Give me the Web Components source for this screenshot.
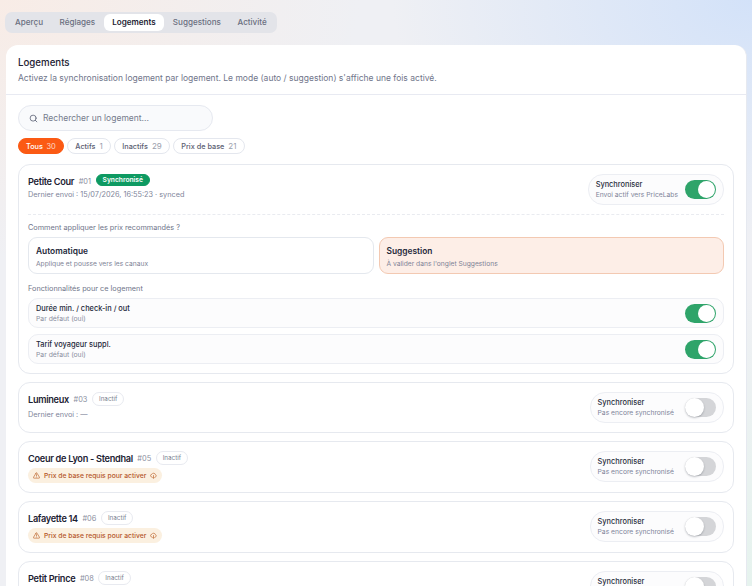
<!DOCTYPE html>
<html lang="fr">
<head>
<meta charset="utf-8">
<title>Logements</title>
<style>
  html, body { height: 100%; }
  body {
    margin: 0;
    height: 586px;
    overflow: hidden;
    font-family: Inter, "Liberation Sans", sans-serif;
    color: #1d2233;
    background:
      radial-gradient(360px 260px at 0 0, #f8ece6 0%, rgba(248,236,230,0) 100%),
      radial-gradient(360px 240px at 100% 0, #d3e2f9 0%, rgba(211,226,249,0) 100%),
      radial-gradient(300px 300px at 100% 100%, #e6f3ee 0%, rgba(230,243,238,0) 100%),
      #eff0f4;
  }
  .page { padding: 12px 5px 0 6px; display: flex; flex-direction: column; gap: 12px; height: 586px; box-sizing: border-box; overflow: hidden; }
</style>
</head>
<body>
<div class="page">
  <app-tabs active="Logements" items="Aperçu,Réglages,Logements,Suggestions,Activité"></app-tabs>
  <main-panel title="Logements" desc="Activez la synchronisation logement par logement. Le mode (auto / suggestion) s'affiche une fois activé.">
    <search-box placeholder="Rechercher un logement..."></search-box>
    <filter-pills></filter-pills>
    <div style="display:flex;flex-direction:column;gap:8px;margin-top:10px">
      <listing-card name="Petite Cour" num="#01" status="on" meta="Dernier envoi : 15/07/2026, 16:55:23 · synced">
        <listing-details></listing-details>
      </listing-card>
      <listing-card name="Lumineux" num="#03" meta="Dernier envoi : —"></listing-card>
      <listing-card name="Coeur de Lyon - Stendhal" num="#05" warn></listing-card>
      <listing-card name="Lafayette 14" num="#06" warn></listing-card>
      <listing-card name="Petit Prince" num="#08" warn></listing-card>
    </div>
  </main-panel>
</div>

<script>
class AppTabs extends HTMLElement {
  connectedCallback() {
    const active = this.getAttribute('active');
    const items = this.getAttribute('items').split(',');
    this.attachShadow({ mode: 'open' }).innerHTML = `
      <style>
        :host { display: flex; margin-left: -1px; }
        .bar { display: flex; gap: .5px; padding: 2px; background: #e3e4e9; border-radius: 7px; height: 17px; }
        .tab { padding: 0 8px; font-size: 8.1px; font-weight: 500; line-height: 17px; color: #6a6f80; border-radius: 6px; }
        .tab.on { background: #fff; color: #1d2233; font-weight: 600; padding: 0 8.5px; }
      </style>
      <div class="bar">${items.map(t => `<div class="tab ${t === active ? 'on' : ''}">${t}</div>`).join('')}</div>`;
  }
}

class MainPanel extends HTMLElement {
  connectedCallback() {
    this.attachShadow({ mode: 'open' }).innerHTML = `
      <style>
        :host { display: block; flex: 1; background: #fff; border-radius: 12px 12px 0 0; border-right: 1px solid #e6e9f0; }
        header { height: 50px; box-sizing: border-box; padding: 11px 12px 0; border-bottom: 1px solid #e8eaf2; }
        h2 { margin: 0; font-size: 9.7px; line-height: 13px; font-weight: 500; color: #1d2233; }
        p { margin: 3px 0 0; font-size: 8.5px; line-height: 13px; color: #70758a; }
        .body { padding: 10px 12px 0; }
      </style>
      <header><h2>${this.getAttribute('title')}</h2><p>${this.getAttribute('desc')}</p></header>
      <div class="body"><slot></slot></div>`;
  }
}

class SearchBox extends HTMLElement {
  connectedCallback() {
    this.attachShadow({ mode: 'open' }).innerHTML = `
      <style>
        :host { display: flex; align-items: center; gap: 5px; width: 195px; height: 26px; box-sizing: border-box;
          padding: 0 10px; background: #f9fafc; border: 1px solid #e6e9f0; border-radius: 13px; }
        svg { width: 9px; height: 9px; flex: none; }
        span { font-size: 8.5px; color: #757a8c; }
      </style>
      <svg viewBox="0 0 24 24" fill="none" stroke="#5f6578" stroke-width="2.2" stroke-linecap="round"><circle cx="11" cy="11" r="8"/><path d="M21 21l-4.3-4.3"/></svg>
      <span>${this.getAttribute('placeholder')}</span>`;
  }
}

class FilterPills extends HTMLElement {
  connectedCallback() {
    const pills = [['Tous', 30, true], ['Actifs', 1], ['Inactifs', 29], ['Prix de base', 21]];
    this.attachShadow({ mode: 'open' }).innerHTML = `
      <style>
        :host { display: flex; gap: 3.5px; margin-top: 7px; }
        .pill { height: 16px; box-sizing: border-box; padding: 0 7px; display: flex; align-items: center; gap: 4px;
          border: 1px solid #e4e7ee; border-radius: 8px; font-size: 7.3px; font-weight: 500; color: #5b6072; background: #fff; }
        .pill i { font-style: normal; font-weight: 400; font-size: 8px; color: #9a9eac; }
        .pill.on { background: #fb5a14; border-color: #fb5a14; color: #fff; gap: 3.5px; }
        .pill.on i { color: #ffd9c7; font-size: 7.5px; }
      </style>
      ${pills.map(([t, n, on]) => `<div class="pill ${on ? 'on' : ''}">${t} <i>${n}</i></div>`).join('')}`;
  }
}

class ToggleSwitch extends HTMLElement {
  connectedCallback() {
    const on = this.hasAttribute('on');
    this.attachShadow({ mode: 'open' }).innerHTML = `
      <style>
        :host { display: block; flex: none; position: relative; width: 31px; height: 19px; border-radius: 10px;
          background: ${on ? '#2fa46a' : '#d4d5d8'}; }
        b { position: absolute; background: #fff; border-radius: 50%;
          ${on ? 'top: 1px; right: 1px; width: 17px; height: 17px;' : 'top: 0; left: 0; width: 19px; height: 19px; box-shadow: 0 1px 2px rgba(40,45,60,.3);'} }
      </style>
      <b></b>`;
  }
}

class SyncBox extends HTMLElement {
  connectedCallback() {
    const on = this.hasAttribute('on');
    this.attachShadow({ mode: 'open' }).innerHTML = `
      <style>
        :host { display: flex; align-items: center; gap: ${on ? 7 : 11}px; height: 31px; box-sizing: border-box;
          padding: 0 7px; border: 1px solid #eceef3; border-radius: 15px; background: #fcfcfd; flex: none; }
        .t { font-size: 7.4px; line-height: 10px; font-weight: 500; color: #2a2e40; }
        .s { font-size: 6.75px; line-height: 10px; color: #80859a; white-space: nowrap; }
      </style>
      <div><div class="t">Synchroniser</div><div class="s">${on ? 'Envoi actif vers PriceLabs' : 'Pas encore synchronisé'}</div></div>
      <toggle-switch ${on ? 'on' : ''}></toggle-switch>`;
  }
}

class ListingCard extends HTMLElement {
  connectedCallback() {
    const on = this.getAttribute('status') === 'on';
    const warn = this.hasAttribute('warn');
    const meta = this.getAttribute('meta');
    const badge = on ? '<span class="badge on">Synchronisé</span>' : '<span class="badge">Inactif</span>';
    const sub = warn
      ? `<div class="warn">
          <svg viewBox="0 0 24 24" fill="none" stroke="#bf6a33" stroke-width="2.4" stroke-linecap="round" stroke-linejoin="round"><path d="M10.3 3.9 1.8 18a2 2 0 0 0 1.7 3h17a2 2 0 0 0 1.7-3L13.7 3.9a2 2 0 0 0-3.4 0z"/><path d="M12 9v4M12 17h.01"/></svg>
          <span>Prix de base requis pour activer</span>
          <svg viewBox="0 0 24 24" fill="none" stroke="#bf6a33" stroke-width="2.4" stroke-linecap="round" stroke-linejoin="round"><path d="M6 17.5A5 5 0 0 1 6.5 7.6a6.5 6.5 0 0 1 12 1.4A4.5 4.5 0 0 1 18.5 17.5"/><path d="M12 12v9M9 18.5l3 3 3-3"/></svg>
        </div>`
      : `<div class="meta" style="margin-top:${on ? 1 : 2.5}px">${meta}</div>`;
    this.attachShadow({ mode: 'open' }).innerHTML = `
      <style>
        :host { display: block; flex: none; box-sizing: border-box; border: 1px solid #e6e9ef; border-radius: 12px; background: #fff; padding: 9px; }
        .top { display: flex; justify-content: space-between; align-items: flex-start; }
        .row { display: flex; align-items: center; gap: 4.5px; height: 14px; }
        .name { font-size: 9.2px; line-height: 12px; padding-top: 2px; font-weight: 600; letter-spacing: -.3px; color: #1d2233; }
        .num { font-size: 7.4px; color: #8b8fa0; }
        .badge { font-size: 6.3px; line-height: 12px; height: 14px; box-sizing: border-box; padding: 0 6px; border: 1px solid #e8eaf0;
          border-radius: 7px; color: #7b7f90; }
        .badge.on { background: #0e9a62; border-color: #0e9a62; color: #fff; font-weight: 600; font-size: 6.7px; height: 12px; line-height: 10px; padding: 0 6px; margin-top: -2px; }
        .meta { font-size: 7.3px; line-height: 12px; color: #80859a; }
        .warn { display: flex; width: fit-content; align-items: center; gap: 4px; height: 15px; padding: 0 5px; margin-top: 3px;
          background: #fbf0e0; border-radius: 8px; font-size: 6.75px; font-weight: 500; color: #b4562a; }
        .warn svg { width: 7px; height: 7px; flex: none; }
      </style>
      <div class="top">
        <div>
          <div class="row"><span class="name">${this.getAttribute('name')}</span><span class="num">${this.getAttribute('num')}</span>${badge}</div>
          ${sub}
        </div>
        <sync-box ${on ? 'on' : ''}></sync-box>
      </div>
      <slot></slot>`;
  }
}

class ModeOption extends HTMLElement {
  connectedCallback() {
    const sel = this.hasAttribute('selected');
    this.attachShadow({ mode: 'open' }).innerHTML = `
      <style>
        :host { display: block; box-sizing: border-box; height: 37px; padding: 6.5px 7px 0; border-radius: 9px;
          border: 1px solid ${sel ? '#f3c9b2' : '#e4e8ee'}; background: ${sel ? '#fdeee7' : '#fff'}; }
        .t { font-size: 8.4px; line-height: 13px; font-weight: 600; color: #24283a; }
        .s { font-size: 6.7px; line-height: 11px; margin-top: 1px; color: #7e8396; }
      </style>
      <div class="t">${this.getAttribute('label')}</div>
      <div class="s">${this.getAttribute('hint')}</div>`;
  }
}

class FeatureRow extends HTMLElement {
  connectedCallback() {
    this.attachShadow({ mode: 'open' }).innerHTML = `
      <style>
        :host { display: flex; justify-content: space-between; align-items: center; box-sizing: border-box; height: 30px;
          padding: 0 7px; border: 1px solid #eceef3; border-radius: 10px; background: #fcfcfd; }
        .txt { padding-top: 2px; }
        .t { font-size: 7.4px; line-height: 10px; font-weight: 500; color: #24283a; }
        .s { font-size: 6.8px; line-height: 10px; color: #8a8ea0; }
      </style>
      <div class="txt"><div class="t">${this.getAttribute('label')}</div><div class="s">Par défaut (oui)</div></div>
      <toggle-switch on></toggle-switch>`;
  }
}

class ListingDetails extends HTMLElement {
  connectedCallback() {
    this.attachShadow({ mode: 'open' }).innerHTML = `
      <style>
        :host { display: block; margin-top: 9px; border-top: 1px dashed #e9ebf0; padding-top: 6.5px; }
        .label { font-size: 7.3px; line-height: 11px; font-weight: 400; color: #70758a; }
        .modes { display: grid; grid-template-columns: 1fr 1fr; gap: 5px; margin: 4.5px 0 8.5px; }
        .rows { display: flex; flex-direction: column; gap: 6px; margin-top: 4.5px; }
      </style>
      <div class="label">Comment appliquer les prix recommandés ?</div>
      <div class="modes">
        <mode-option label="Automatique" hint="Applique et pousse vers les canaux"></mode-option>
        <mode-option selected label="Suggestion" hint="À valider dans l'onglet Suggestions"></mode-option>
      </div>
      <div class="label">Fonctionnalités pour ce logement</div>
      <div class="rows">
        <feature-row label="Durée min. / check-in / out"></feature-row>
        <feature-row label="Tarif voyageur suppl."></feature-row>
      </div>`;
  }
}

customElements.define('app-tabs', AppTabs);
customElements.define('main-panel', MainPanel);
customElements.define('search-box', SearchBox);
customElements.define('filter-pills', FilterPills);
customElements.define('toggle-switch', ToggleSwitch);
customElements.define('sync-box', SyncBox);
customElements.define('listing-card', ListingCard);
customElements.define('mode-option', ModeOption);
customElements.define('feature-row', FeatureRow);
customElements.define('listing-details', ListingDetails);
</script>
</body>
</html>
